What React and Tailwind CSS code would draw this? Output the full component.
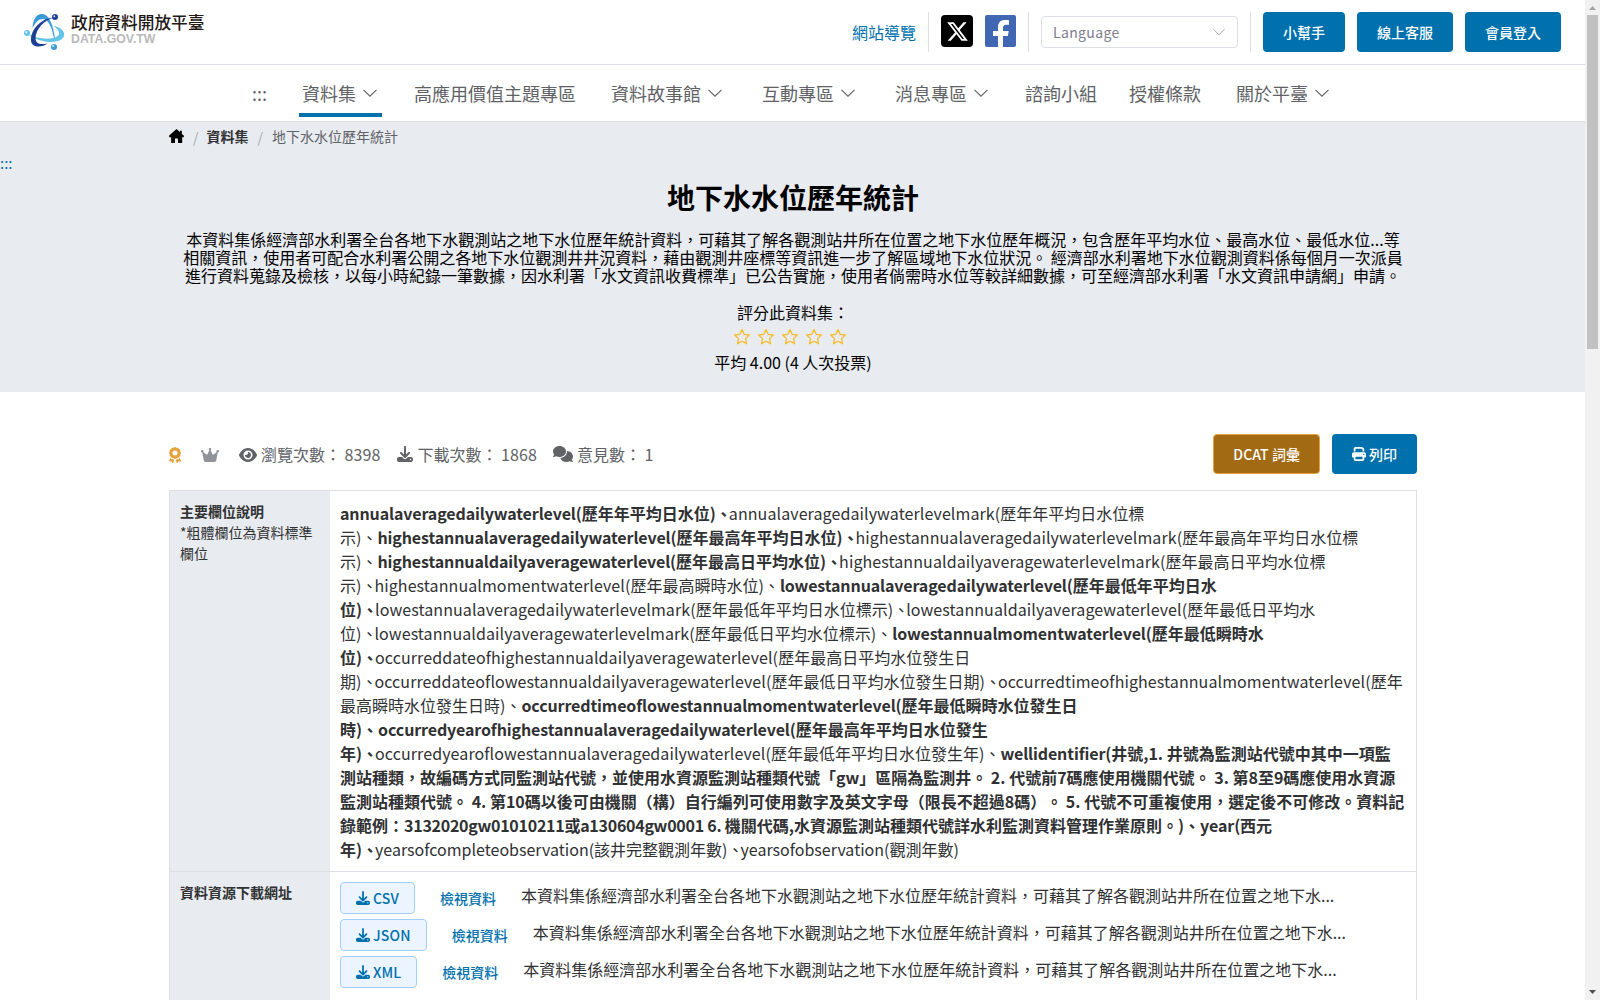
import { FaAward, FaCrown, FaEye, FaDownload, FaComments, FaPrint, FaXTwitter } from "react-icons/fa6";

const SUMMARY =
  "本資料集係經濟部水利署全台各地下水觀測站之地下水位歷年統計資料，可藉其了解各觀測站井所在位置之地下水位歷年概況，包含歷年平均水位、最高水位、最低水位...等相關資訊，使用者可配合水利署公開之各地下水位觀測井井況資料，藉由觀測井座標等資訊進一步了解區域地下水位狀況。 經濟部水利署地下水位觀測資料係每個月一次派員進行資料蒐錄及檢核，以每小時紀錄一筆數據，因水利署「水文資訊收費標準」已公告實施，使用者倘需時水位等較詳細數據，可至經濟部水利署「水文資訊申請網」申請。";

const NAV = [
  { text: "高應用價值主題專區", cls: "ml-8" },
  { text: "資料故事館", cls: "ml-[35px]", menu: true },
  { text: "互動專區", cls: "ml-[39px]", menu: true },
  { text: "消息專區", cls: "ml-[39px]", menu: true },
  { text: "諮詢小組", cls: "ml-9" },
  { text: "授權條款", cls: "ml-8" },
  { text: "關於平臺", cls: "ml-[35px]", menu: true },
];

// bold = field defined by the data standard
const FIELDS = [
  { bold: true, name: "annualaveragedailywaterlevel", desc: "歷年年平均日水位" },
  { name: "annualaveragedailywaterlevelmark", desc: "歷年年平均日水位標示" },
  { bold: true, name: "highestannualaveragedailywaterlevel", desc: "歷年最高年平均日水位" },
  { name: "highestannualaveragedailywaterlevelmark", desc: "歷年最高年平均日水位標示" },
  { bold: true, name: "highestannualdailyaveragewaterlevel", desc: "歷年最高日平均水位" },
  { name: "highestannualdailyaveragewaterlevelmark", desc: "歷年最高日平均水位標示" },
  { name: "highestannualmomentwaterlevel", desc: "歷年最高瞬時水位" },
  { bold: true, name: "lowestannualaveragedailywaterlevel", desc: "歷年最低年平均日水位" },
  { name: "lowestannualaveragedailywaterlevelmark", desc: "歷年最低年平均日水位標示" },
  { name: "lowestannualdailyaveragewaterlevel", desc: "歷年最低日平均水位" },
  { name: "lowestannualdailyaveragewaterlevelmark", desc: "歷年最低日平均水位標示" },
  { bold: true, name: "lowestannualmomentwaterlevel", desc: "歷年最低瞬時水位" },
  { name: "occurreddateofhighestannualdailyaveragewaterlevel", desc: "歷年最高日平均水位發生日期" },
  { name: "occurreddateoflowestannualdailyaveragewaterlevel", desc: "歷年最低日平均水位發生日期" },
  { name: "occurredtimeofhighestannualmomentwaterlevel", desc: "歷年最高瞬時水位發生日時" },
  { bold: true, name: "occurredtimeoflowestannualmomentwaterlevel", desc: "歷年最低瞬時水位發生日時" },
  { bold: true, name: "occurredyearofhighestannualaveragedailywaterlevel", desc: "歷年最高年平均日水位發生年" },
  { name: "occurredyearoflowestannualaveragedailywaterlevel", desc: "歷年最低年平均日水位發生年" },
  {
    bold: true,
    name: "wellidentifier",
    desc: (
      <>
        井號,1. 井號為監測站代號中其中一項監測站種類，故編碼方式同監測站代號，並使用水資源監測站種類代號「gw」區隔為監測井。 2. 代號前7碼應使用機關代號。 3. 第8至9碼應使用水資源監測站種類代號。 4. 第10碼以後可由機關（構）自行編列可使用數字及英文字母（限長不超過8碼）。 5. 代號不可重複使用，選定後不可修改。資料記錄範例：
        <span className="tracking-[-0.26px]">3132020gw01010211或a130604gw0001 6. </span>
        機關代碼,水資源監測站種類代號詳水利監測資料管理作業原則。
      </>
    ),
  },
  { bold: true, name: "year", desc: "西元年" },
  { name: "yearsofcompleteobservation", desc: "該井完整觀測年數", tight: true },
  { name: "yearsofobservation", desc: "觀測年數", tight: true },
];

const FILES = ["CSV", "JSON", "XML"];

function Chevron({ className }) {
  return (
    <svg viewBox="0 0 16 16" className={className} fill="none" stroke="currentColor" strokeWidth="1.1">
      <path d="M1.5 4.8 8 11.2l6.5-6.4" />
    </svg>
  );
}

function Star() {
  return (
    <svg viewBox="0 0 18 18" className="size-[18px]" fill="none" stroke="currentColor" strokeWidth="1.3" strokeLinejoin="round">
      <path d="m9 1.600 2.200 4.700 5.100.7-3.700 3.600.9 5.200L9 13.300l-4.500 2.500.9-5.200L1.700 7l5.100-.7Z" />
    </svg>
  );
}

function Logo() {
  return (
    <a className="flex items-center">
      <svg viewBox="0 0 40 36" className="h-9 w-10">
        <path d="M8.500 14C9 6 12 0 18 0c6 0 11 8 13.500 27l-1 0C28 12 24 5 18.500 5 14.500 5 12 8 8.500 14Z" fill="#3a9bd9" />
        <path d="M4 20c8 4.500 18 5.500 26 4 7-2 7-7-1-12.500 9 2 12 6.500 11 10.500-2 6-13 7-21 5C12 25.500 7 23 4 20Z" fill="#62c5e8" />
        <path d="M30 3.500C20 6 12 15 11.500 24c0 6 5 7 12 5.500-5 4-16 5-16.500-3C6.500 16 17 4 30 3.500Z" fill="#1c3f94" />
        <circle cx="31" cy="3" r="3" fill="#1c3f94" />
        <circle cx="30.300" cy="2.300" r="1" fill="#c9d3ec" />
        <circle cx="3" cy="19" r="3" fill="#62c5e8" />
        <circle cx="2.300" cy="18.300" r="1.100" fill="#e4f5fb" />
        <circle cx="30" cy="33" r="3" fill="#3a9bd9" />
        <circle cx="29.200" cy="32" r="1.100" fill="#d5ebf7" />
      </svg>
      <span className="-mt-[5px] ml-[7px] flex flex-col">
        <span className="text-[16.7px] leading-[19px] font-medium text-[#231815]">政府資料開放平臺</span>
        <span className="mt-px font-['Liberation_Sans'] text-[12.3px] leading-[13px] font-bold text-[#b9b9ba]">DATA.GOV.TW</span>
      </span>
    </a>
  );
}

function Divider() {
  return <span className="h-10 w-px bg-[#dcdfe6]" />;
}

function BlueButton({ children }) {
  return (
    <button className="flex h-10 items-center rounded bg-[#0071ad] px-5 text-sm font-medium text-white">{children}</button>
  );
}

function Header() {
  return (
    <header className="flex h-[65px] items-center justify-between border-b border-[#dcdfe6] px-6">
      <Logo />
      <div className="flex items-center gap-3">
        <a className="text-base text-[#0071ad]">網站導覽</a>
        <Divider />
        <span className="-mt-0.5 flex size-8 items-center justify-center rounded bg-black text-white">
          <FaXTwitter className="size-[23px]" />
        </span>
        <svg viewBox="0 0 31 32" className="-mt-0.5 h-8 w-[31px]">
          <rect width="31" height="32" rx="2" fill="#4267b2" />
          <path fill="#fff" d="M13 32V21H8v-5h5v-3.500C13 7.500 15.500 5 19.800 5c1.700 0 3.200.2 4.200.3v4.500h-2.800c-2.200 0-3.200 1-3.200 2.900V16h5.700l-.8 5H18v11Z" />
        </svg>
        <Divider />
        <div className="flex h-8 w-[197px] items-center justify-between rounded border border-[#dcdfe6] px-[11px] text-[14px] tracking-[0.35px] text-[#7d7d8d]">
          Language
          <Chevron className="size-3.5 text-[#a8abb2]" />
        </div>
        <Divider />
        <BlueButton>小幫手</BlueButton>
        <BlueButton>線上客服</BlueButton>
        <BlueButton>會員登入</BlueButton>
      </div>
    </header>
  );
}

function Nav() {
  return (
    <nav className="flex h-[57px] border-b border-[#dcdfe6] pl-[252px] text-lg leading-[58px] text-[#606266]">
      <span className="-mt-px">:::</span>
      <span className="ml-8 flex h-[52px] items-center border-b-4 border-[#0071ad] pt-2 pr-1 pl-[3px]">
        資料集
        <Chevron className="ml-1.5 size-4" />
      </span>
      {NAV.map((n) => (
        <span key={n.text} className={`flex items-center ${n.cls}`}>
          {n.text}
          {n.menu && <Chevron className="ml-1.5 size-4" />}
        </span>
      ))}
    </nav>
  );
}

function Hero() {
  return (
    <section className="h-[270px] bg-[#e8ebf0] text-black">
      <div className="ml-[169px] flex h-7 items-center text-sm text-[#606266]">
        <svg viewBox="0 0 45 43" className="h-[14px] w-[15px]">
          <path d="M22.500 0 0 20v5h6v18h12V29h9v14h13V25h5v-5l-6-5V5h-6v4Z" fill="#000" />
        </svg>
        <span className="mr-2 -mb-0.5 ml-[9px] text-[#a8abb2]">/</span>
        <b className="text-[#303133]">資料集</b>
        <span className="mx-[9px] -mb-0.5 text-[#a8abb2]">/</span>
        <span>地下水水位歷年統計</span>
      </div>
      <div className="h-[31px] pt-[3px] text-[15px] leading-[19px] text-[#0071ad]">:::</div>
      <div className="ml-[179px] w-[1228px] text-center">
        <h1 className="text-[28px] leading-8 font-bold">地下水水位歷年統計</h1>
        <p className="mt-[17px] text-base leading-[18px]">{SUMMARY}</p>
        <p className="mt-[19px] text-base leading-[18px]">評分此資料集：</p>
        <div className="mt-1 flex h-6 items-center justify-center gap-1.5 pr-[7px] text-[#f7ba2a]">
          {[1, 2, 3, 4, 5].map((i) => <Star key={i} />)}
        </div>
        <p className="mt-px text-base leading-6">平均 4.00 (4 人次投票)</p>
      </div>
    </section>
  );
}

function Stats() {
  return (
    <div className="flex h-10 items-center text-base text-[#606266]">
      <FaAward className="mt-px h-4 w-3 text-[#e6a23c]" />
      <FaCrown className="mt-px ml-5 h-4 w-[18px] text-[#909399]" />
      <FaEye className="mt-px ml-5 h-4 w-[18px]" />
      <span className="ml-1">瀏覽次數： <span className="tracking-[0.1px]">8398</span></span>
      <FaDownload className="ml-4 size-4" />
      <span className="ml-[5px]">下載次數： <span className="tracking-[0.1px]">1868</span></span>
      <FaComments className="ml-4 h-4 w-5" />
      <span className="ml-1">意見數： 1</span>
      <button className="ml-auto flex h-10 items-center rounded border border-[#e6a23c] bg-[#a36a14] px-[19px] text-sm font-medium tracking-[0.05px] text-white">DCAT 詞彙</button>
      <span className="w-3" />
      <BlueButton>
        <FaPrint className="mr-[3px] size-3.5" />列印
      </BlueButton>
    </div>
  );
}

// \u2060 keeps the separator glued to the next field name
function Field({ bold, tight, name, desc, last }) {
  const end = last ? ")" : ")、\u2060";
  if (bold) {
    return <b><span className="tracking-[-0.115px]">{name}(</span>{desc}{end}</b>;
  }
  return (
    <span className="-ml-[3px]">
      <span className={tight ? "tracking-normal" : "tracking-[0.095px]"}>{name}(</span>{desc}{end}
    </span>
  );
}

function Details() {
  return (
    <div className="mt-4 border-x border-t border-[#dcdfe6] text-base leading-6 text-[#303133]">
      <div className="flex border-b border-[#dcdfe6]">
        <div className="w-40 shrink-0 bg-[#e8ebf0] p-2.5 text-sm leading-[21px]">
          <b>主要欄位說明</b>
          <br />
          *粗體欄位為資料標準欄位
        </div>
        <div className="w-[1086px] p-2.5 [text-spacing-trim:space-all]">
          {FIELDS.map((f, i) => <Field key={f.name} {...f} last={i === FIELDS.length - 1} />)}
        </div>
      </div>
      <div className="flex h-[140px]">
        <div className="w-40 shrink-0 bg-[#e8ebf0] p-2.5 text-sm leading-[21px]">
          <b>資料資源下載網址</b>
        </div>
        <div className="flex flex-col gap-[5px] p-2.5">
          {FILES.map((name) => (
            <div key={name} className="flex h-8 items-center">
              <span className="flex h-8 items-center rounded border border-[#a0cfff] bg-[#ecf5ff] px-[15px] text-sm font-medium text-[#0071ad]">
                <FaDownload className="mr-[3px] size-3.5" />
                <span className="tracking-[0.15px]">{name}</span>
              </span>
              <a className="ml-[25px] text-sm font-medium text-[#0071ad]">檢視資料</a>
              <span className="-mt-1.5 ml-[25px]">本資料集係經濟部水利署全台各地下水觀測站之地下水位歷年統計資料，可藉其了解各觀測站井所在位置之地下水...</span>
            </div>
          ))}
        </div>
      </div>
    </div>
  );
}

// page scroll bar along the right edge
function ScrollBar() {
  return (
    <div className="flex w-[15px] flex-col items-center justify-between bg-[#f1f1f1]">
      <div className="flex w-full flex-col items-center">
        <svg viewBox="0 0 15 15" className="size-[15px]"><path d="M4 10h7L7.500 6Z" fill="#a3a3a3" /></svg>
        <div className="h-[334px] w-[11px] bg-[#c1c1c1]" />
      </div>
      <svg viewBox="0 0 15 15" className="size-[15px]"><path d="M4 5h7L7.500 9Z" fill="#505050" /></svg>
    </div>
  );
}

export default function App() {
  return (
    <div lang="zh-TW" className="flex h-[1000px] w-[1600px] overflow-hidden bg-white font-['Noto_Sans_CJK_TC',sans-serif]">
      <div className="w-[1585px] overflow-hidden">
        <Header />
        <Nav />
        <Hero />
        <main className="mt-[42px] ml-[169px] w-[1248px]">
          <Stats />
          <Details />
        </main>
      </div>
      <ScrollBar />
    </div>
  );
}
